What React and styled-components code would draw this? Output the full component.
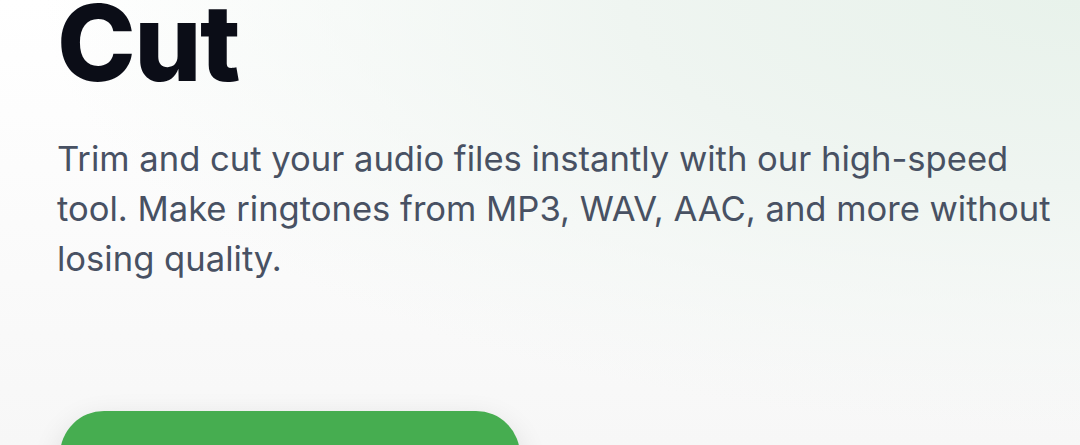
import React from "react";
import styled, { createGlobalStyle } from "styled-components";

const GlobalStyle = createGlobalStyle`
  html, body {
    margin: 0;
    padding: 0;
  }
  body {
    font-family: Inter, "Noto Sans", "Liberation Sans", sans-serif;
    -webkit-font-smoothing: antialiased;
  }
  * { box-sizing: border-box; }
`;

const Page = styled.main`
  width: 1080px;
  height: 445px;
  overflow: hidden;
  background:
    radial-gradient(120% 120% at 100% 0%, #e8f2eb 0%, #eff5f1 35%, rgba(250, 250, 250, 0) 80%),
    linear-gradient(180deg, #ffffff 0%, #f7f7f7 100%);
`;

const Hero = styled.section`
  display: flex;
  flex-direction: column;
  align-items: flex-start;
  padding: 0 0 0 57px;
  margin-top: -10px;
`;

const Title = styled.h1`
  margin: 0;
  font-family: Inter, "Liberation Sans", sans-serif;
  font-size: 106px;
  font-weight: 800;
  line-height: 1;
  letter-spacing: -0.015em;
  color: #0b0d17;
`;

const Lead = styled.p`
  margin: 37px 0 0;
  max-width: 1015px;
  font-family: Inter, "Liberation Sans", sans-serif;
  font-size: 34.6px;
  font-weight: 400;
  line-height: 50px;
  letter-spacing: 0;
  color: #485163;
`;

const CtaButton = styled.button`
  margin-top: 128px;
  margin-left: 3px;
  width: 460px;
  height: 100px;
  border: none;
  border-radius: 44px;
  background: #46ad50;
  color: #ffffff;
  font-family: Inter, "Liberation Sans", sans-serif;
  font-size: 26px;
  font-weight: 700;
  box-shadow: 0 10px 30px rgba(0, 0, 0, 0.12);
  cursor: pointer;
`;

export default function App() {
  return (
    <>
      <GlobalStyle />
      <Page>
        <Hero>
          <Title>Cut</Title>
          <Lead>
            Trim and cut your audio files instantly with our high-speed tool. Make
            ringtones from MP3, WAV, AAC, and more without losing quality.
          </Lead>
          <CtaButton>Select Audio File</CtaButton>
        </Hero>
      </Page>
    </>
  );
}
